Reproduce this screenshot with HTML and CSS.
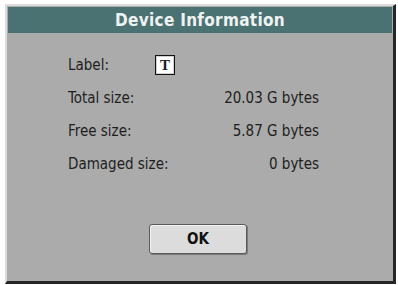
FILE: index.html
```html
<!DOCTYPE html>
<html lang="en">
<head>
    <meta charset="UTF-8">
    <title>Device Information</title>
    <link rel="stylesheet" href="styles.css">
</head>
<body>
    <div class="dialog">
        <div class="title">Device Information</div>

        <div class="info">
            <div class="row">
                <span class="label">Label:</span>
                <span class="tag">T</span>
            </div>
            <div class="row">
                <span class="label">Total size:</span>
                <span class="value">20.03 G bytes</span>
            </div>
            <div class="row">
                <span class="label">Free size:</span>
                <span class="value">5.87 G bytes</span>
            </div>
            <div class="row">
                <span class="label">Damaged size:</span>
                <span class="value">0 bytes</span>
            </div>
        </div>

        <div class="actions">
            <button class="ok-btn">OK</button>
        </div>
    </div>
</body>
</html>
```

FILE: styles.css
```css
/* Base */
* {
    margin: 0;
    padding: 0;
    box-sizing: border-box;
}

body {
    background-color: #fff;
    font-family: "DejaVu Sans Condensed", "DejaVu Sans", sans-serif;
    font-stretch: condensed;
    color: #1e1e1e;
}

/* Dialog frame */
.dialog {
    margin: 4px 0 0 5px;
    width: 391px;
    height: 280px;
    background-color: #ababab;
    border-style: solid;
    border-width: 2px 3px 3px 2px;
    border-color: #dcdcdc #262626 #262626 #dcdcdc;
    padding: 1px;
    display: flex;
    flex-direction: column;
}

/* Title bar */
.title {
    height: 26px;
    line-height: 26px;
    background-color: #4b7272;
    color: #eef2f2;
    text-align: center;
    font-size: 17px;
    font-weight: bold;
    letter-spacing: 0.3px;
}

/* Info rows */
.info {
    padding: 15px 73px 0 60px;
}

.row {
    display: flex;
    align-items: center;
    height: 33px;
    font-size: 15px;
}

.label {
    width: 87px;
    white-space: nowrap;
}

.value {
    margin-left: auto;
}

.tag {
    width: 20px;
    height: 20px;
    border: 1px solid #111;
    background-color: #fff;
    box-shadow: inset 0 0 0 1px #d0d0d0;
    font-family: "Liberation Serif", serif;
    font-weight: bold;
    font-size: 15px;
    line-height: 18px;
    text-align: center;
}

/* Button */
.actions {
    display: flex;
    justify-content: center;
    margin-top: 44px;
    padding-right: 4px;
}

.ok-btn {
    width: 98px;
    height: 30px;
    background-color: #dcdcdc;
    border: 1px solid #5a5a5a;
    border-radius: 3px;
    box-shadow: inset 1px 1px 0 #f2f2f2, 1px 1px 0 #7a7a7a;
    font-family: "DejaVu Sans Condensed", "DejaVu Sans", sans-serif;
    font-stretch: condensed;
    font-weight: bold;
    font-size: 15px;
    color: #111;
}
```
